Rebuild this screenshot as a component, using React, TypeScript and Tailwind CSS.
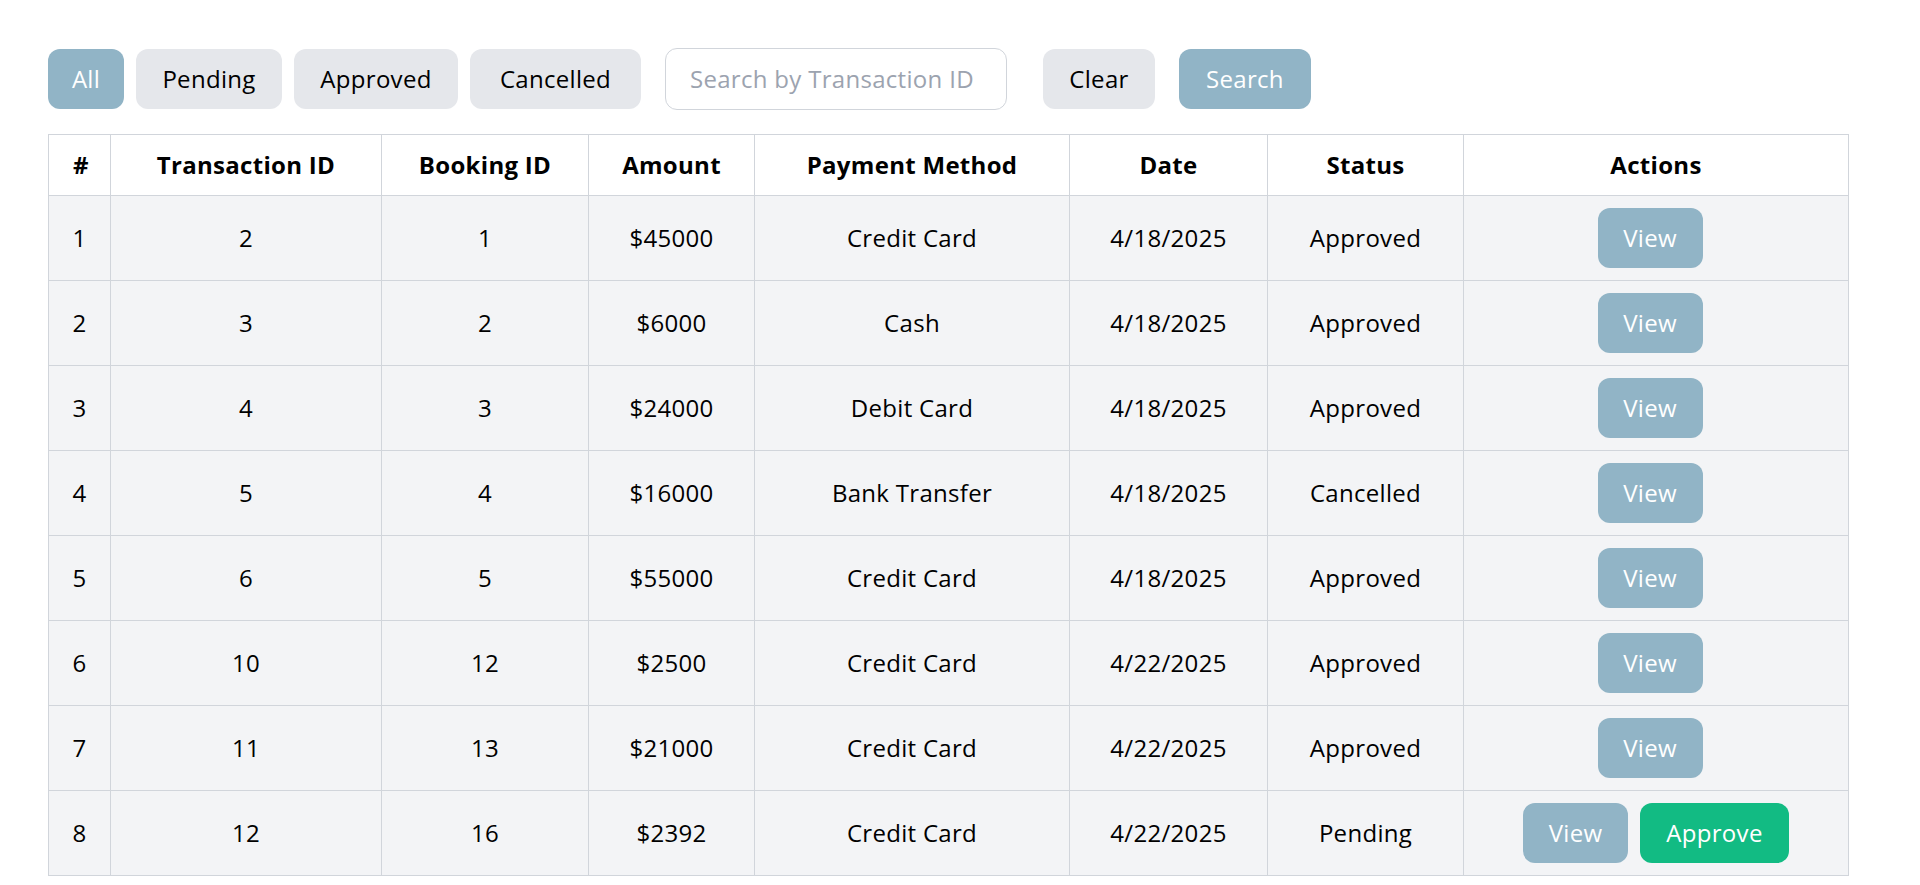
import React, { useState } from 'react';

type Transaction = {
  id: number;
  bookingId: number;
  amount: number;
  method: string;
  date: string;
  status: 'Approved' | 'Pending' | 'Cancelled';
};

const transactions: Transaction[] = [
  { id: 2, bookingId: 1, amount: 45000, method: 'Credit Card', date: '4/18/2025', status: 'Approved' },
  { id: 3, bookingId: 2, amount: 6000, method: 'Cash', date: '4/18/2025', status: 'Approved' },
  { id: 4, bookingId: 3, amount: 24000, method: 'Debit Card', date: '4/18/2025', status: 'Approved' },
  { id: 5, bookingId: 4, amount: 16000, method: 'Bank Transfer', date: '4/18/2025', status: 'Cancelled' },
  { id: 6, bookingId: 5, amount: 55000, method: 'Credit Card', date: '4/18/2025', status: 'Approved' },
  { id: 10, bookingId: 12, amount: 2500, method: 'Credit Card', date: '4/22/2025', status: 'Approved' },
  { id: 11, bookingId: 13, amount: 21000, method: 'Credit Card', date: '4/22/2025', status: 'Approved' },
  { id: 12, bookingId: 16, amount: 2392, method: 'Credit Card', date: '4/22/2025', status: 'Pending' },
];

// button widths follow the original wide font
const filters = [
  { label: 'All', width: 'w-[76px]' },
  { label: 'Pending', width: 'w-[146px]' },
  { label: 'Approved', width: 'w-[164px]' },
  { label: 'Cancelled', width: 'w-[171px]' },
];

const headers = ['#', 'Transaction ID', 'Booking ID', 'Amount', 'Payment Method', 'Date', 'Status', 'Actions'];
const colWidths = ['w-[62px]', 'w-[271px]', 'w-[207px]', 'w-[166px]', 'w-[315px]', 'w-[198px]', 'w-[196px]', 'w-[385px]'];

const App = () => {
  const [active, setActive] = useState('All');
  const [query, setQuery] = useState('');

  return (
    <div
      className="min-h-screen bg-white px-[48px] pt-[48px] pb-[210px] text-[24px] leading-[36px] tracking-[0.3px] text-black"
      style={{ fontFamily: '"Open Sans", "Noto Sans", sans-serif' }}
    >
      <div className="mb-[24px] flex items-center gap-[12px]">
        {filters.map((f) => (
          <button
            key={f.label}
            onClick={() => setActive(f.label)}
            className={
              f.label === active
                ? `${f.width} rounded-[12px] bg-[#91b4c6] py-[12px] text-center text-white`
                : `${f.width} rounded-[12px] bg-[#e5e7eb] py-[12px] text-center text-black`
            }
          >
            {f.label}
          </button>
        ))}
        <input
          value={query}
          onChange={(e) => setQuery(e.target.value)}
          placeholder="Search by Transaction ID"
          className="ml-[12px] w-[342px] rounded-[12px] border border-[#d1d5db] bg-white px-[24px] py-[12px] outline-none placeholder:text-[#9ca3af]"
        />
        <button className="ml-[24px] w-[112px] rounded-[12px] bg-[#e5e7eb] py-[12px] text-black">Clear</button>
        <button className="ml-[12px] w-[132px] rounded-[12px] bg-[#91b4c6] py-[12px] text-white">Search</button>
      </div>

      <table className="w-[1800px] table-fixed border-collapse border border-[#d1d5db]">
        <colgroup>
          {colWidths.map((w, i) => (
            <col key={i} className={w} />
          ))}
        </colgroup>
        <thead>
          <tr className="bg-white">
            {headers.map((h) => (
              <th key={h} className="border border-[#d1d5db] px-[24px] py-[12px] text-center font-bold">
                {h}
              </th>
            ))}
          </tr>
        </thead>
        <tbody>
          {transactions.map((t, i) => (
            <tr key={t.id} className="bg-[#f3f4f6]">
              <td className="border border-[#d1d5db] px-[12px] py-[12px] text-center">{i + 1}</td>
              <td className="border border-[#d1d5db] px-[24px] py-[12px] text-center">{t.id}</td>
              <td className="border border-[#d1d5db] px-[24px] py-[12px] text-center">{t.bookingId}</td>
              <td className="border border-[#d1d5db] px-[24px] py-[12px] text-center">${t.amount}</td>
              <td className="border border-[#d1d5db] px-[24px] py-[12px] text-center">{t.method}</td>
              <td className="border border-[#d1d5db] px-[24px] py-[12px] text-center">{t.date}</td>
              <td className="border border-[#d1d5db] px-[24px] py-[12px] text-center">{t.status}</td>
              <td className="border border-[#d1d5db] px-[24px] py-[12px]">
                <div className="flex justify-center gap-[12px]">
                  <button className="w-[105px] rounded-[12px] bg-[#91b4c6] py-[12px] text-white">View</button>
                  {t.status === 'Pending' ? (
                    <button className="w-[149px] rounded-[12px] bg-[#12bb83] py-[12px] text-white">Approve</button>
                  ) : (
                    <span />
                  )}
                </div>
              </td>
            </tr>
          ))}
        </tbody>
      </table>
    </div>
  );
};

export default App;
